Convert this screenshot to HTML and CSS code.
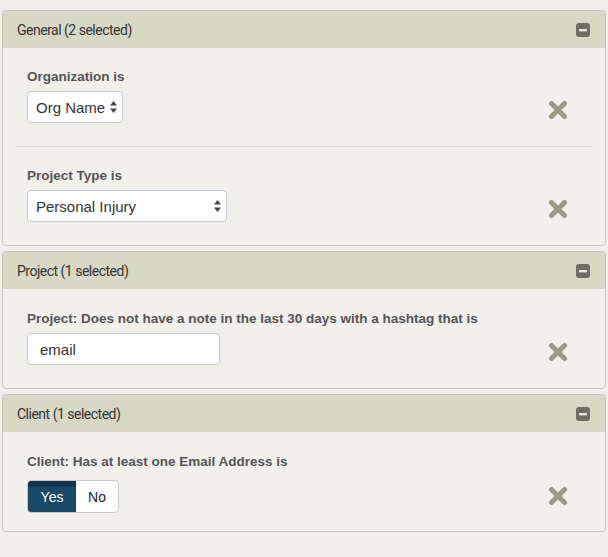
FILE: index.html
```html
<!DOCTYPE html>
<html>
<head>
<meta charset="utf-8">
<link rel="stylesheet" href="styles.css">
</head>
<body>
<div class="panel">
  <div class="panel-head">
    <span class="panel-title">General (2 selected)</span>
    <svg class="collapse" viewBox="0 0 14 14" width="14" height="14"><rect x="0" y="0" width="14" height="14" rx="3" fill="#6d6d66"/><rect x="3" y="6" width="8" height="2.4" fill="#e4e4da"/></svg>
  </div>
  <div class="panel-body">
    <div class="filter">
      <div class="filter-main">
        <div class="filter-label">Organization is</div>
        <div class="select-wrap w-org">
          <select class="select"><option>Org Name</option></select>
          <svg class="arrows" viewBox="0 0 7 12" width="7" height="12"><path d="M3.5 0 L7 4.5 H0 Z M3.5 12 L7 7.5 H0 Z" fill="#444"/></svg>
        </div>
      </div>
      <svg class="remove" viewBox="0 0 20 20" width="20" height="20"><path d="M3.5 3.5 L16.5 16.5 M16.5 3.5 L3.5 16.5" stroke="#9a9a86" stroke-width="5" stroke-linecap="round"/></svg>
    </div>
    <div class="filter sep">
      <div class="filter-main">
        <div class="filter-label">Project Type is</div>
        <div class="select-wrap w-type">
          <select class="select"><option>Personal Injury</option></select>
          <svg class="arrows" viewBox="0 0 7 12" width="7" height="12"><path d="M3.5 0 L7 4.5 H0 Z M3.5 12 L7 7.5 H0 Z" fill="#444"/></svg>
        </div>
      </div>
      <svg class="remove" viewBox="0 0 20 20" width="20" height="20"><path d="M3.5 3.5 L16.5 16.5 M16.5 3.5 L3.5 16.5" stroke="#9a9a86" stroke-width="5" stroke-linecap="round"/></svg>
    </div>
  </div>
</div>

<div class="panel">
  <div class="panel-head">
    <span class="panel-title">Project (1 selected)</span>
    <svg class="collapse" viewBox="0 0 14 14" width="14" height="14"><rect x="0" y="0" width="14" height="14" rx="3" fill="#6d6d66"/><rect x="3" y="6" width="8" height="2.4" fill="#e4e4da"/></svg>
  </div>
  <div class="panel-body">
    <div class="filter single">
      <div class="filter-main">
        <div class="filter-label">Project: Does not have a note in the last 30 days with a hashtag that is</div>
        <input class="text-input" type="text" value="email">
      </div>
      <svg class="remove" viewBox="0 0 20 20" width="20" height="20"><path d="M3.5 3.5 L16.5 16.5 M16.5 3.5 L3.5 16.5" stroke="#9a9a86" stroke-width="5" stroke-linecap="round"/></svg>
    </div>
  </div>
</div>

<div class="panel">
  <div class="panel-head">
    <span class="panel-title">Client (1 selected)</span>
    <svg class="collapse" viewBox="0 0 14 14" width="14" height="14"><rect x="0" y="0" width="14" height="14" rx="3" fill="#6d6d66"/><rect x="3" y="6" width="8" height="2.4" fill="#e4e4da"/></svg>
  </div>
  <div class="panel-body">
    <div class="filter single filter-toggle">
      <div class="filter-main">
        <div class="filter-label">Client: Has at least one Email Address is</div>
        <div class="toggle">
          <span class="toggle-btn active">Yes</span>
          <span class="toggle-btn">No</span>
        </div>
      </div>
      <svg class="remove" viewBox="0 0 20 20" width="20" height="20"><path d="M3.5 3.5 L16.5 16.5 M16.5 3.5 L3.5 16.5" stroke="#9a9a86" stroke-width="5" stroke-linecap="round"/></svg>
    </div>
  </div>
</div>
</body>
</html>
```
FILE: styles.css
```css
html, body {
  margin: 0;
  background: #f0efe9;
}
body {
  padding: 10px 2px 20px 2px;
  font-family: "Liberation Sans", Arial, sans-serif;
}
.panel {
  border: 1px solid #c6c6ba;
  border-radius: 4px;
  background: #f1f0ea;
  margin-bottom: 5px;
  overflow: hidden;
}
.panel-head {
  height: 37px;
  background: #d8d8c6;
  display: flex;
  align-items: center;
  justify-content: space-between;
  padding: 0 15px 0 14px;
}
.panel-title {
  font-family: Roboto, "Liberation Sans", sans-serif;
  font-size: 14px;
  letter-spacing: -0.5px;
  color: #333;
}
.collapse {
  display: block;
}
.panel-body {
  padding: 0 14px 0 14px;
}
.filter {
  display: flex;
  align-items: flex-end;
  justify-content: space-between;
  padding: 20px 23px 23px 10px;
}
.filter.single {
  padding-top: 21px;
}
.filter.sep {
  border-top: 1px solid #dcdbd3;
}
.filter-main {
  display: flex;
  flex-direction: column;
  align-items: flex-start;
}
.filter-label {
  font-size: 13.5px;
  font-weight: bold;
  color: #555;
  line-height: 18px;
  margin-bottom: 5px;
}
.select-wrap {
  position: relative;
  height: 32px;
}
.w-org { width: 96px; }
.w-type { width: 200px; }
.select {
  appearance: none;
  -webkit-appearance: none;
  box-sizing: border-box;
  width: 100%;
  height: 32px;
  margin: 0;
  border: 1px solid #c8c8c8;
  border-radius: 4px;
  background: #fff;
  font-family: "Liberation Sans", Arial, sans-serif;
  font-size: 15px;
  color: #333;
  padding: 0 0 0 8px;
}
.arrows {
  position: absolute;
  right: 6px;
  top: 10px;
  pointer-events: none;
}
.text-input {
  box-sizing: border-box;
  width: 193px;
  height: 32px;
  margin: 0;
  border: 1px solid #c8c8c8;
  border-radius: 4px;
  background: #fff;
  font-family: "Liberation Sans", Arial, sans-serif;
  font-size: 15px;
  color: #333;
  padding: 0 12px;
}
.filter-toggle {
  padding-bottom: 18px;
}
.toggle {
  display: flex;
  height: 33px;
  margin-top: 4px;
  border: 1px solid #c8c8c8;
  border-radius: 4px;
  overflow: hidden;
  box-sizing: border-box;
  background: #fff;
}
.toggle-btn {
  display: flex;
  align-items: center;
  justify-content: center;
  font-size: 14px;
  color: #222;
  width: 42px;
}
.toggle-btn.active {
  width: 48px;
  color: #fff;
  background: linear-gradient(#0e3450 0, #0e3450 5px, #174866 6px, #174866 100%);
}
.remove {
  display: block;
  margin-bottom: 3px;
}
.filter-toggle .remove {
  margin-bottom: 7px;
}
```
